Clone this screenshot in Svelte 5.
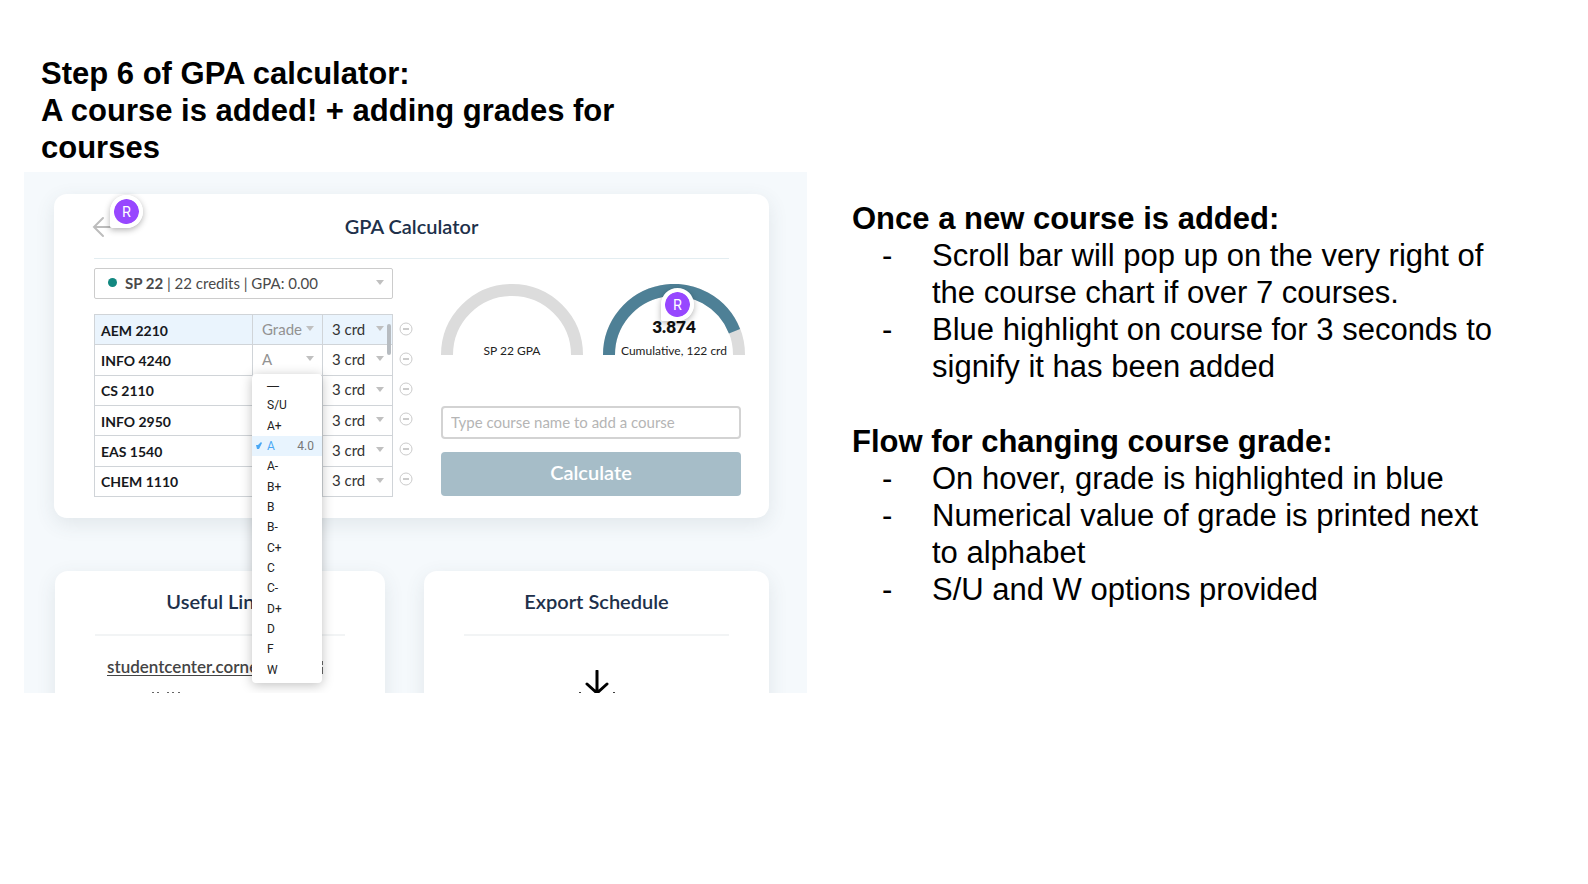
<script>
  const courses = [
    { name: 'AEM 2210', grade: 'Grade', fresh: true },
    { name: 'INFO 4240', grade: 'A' },
    { name: 'CS 2110', grade: '' },
    { name: 'INFO 2950', grade: '' },
    { name: 'EAS 1540', grade: '' },
    { name: 'CHEM 1110', grade: '' }
  ];
  const grades = ['—', 'S/U', 'A+', 'A', 'A-', 'B+', 'B', 'B-', 'C+', 'C', 'C-', 'D+', 'D', 'F', 'W'];
  const notes = [
    {
      title: 'Once a new course is added:',
      items: [
        'Scroll bar will pop up on the very right of the course chart if over 7 courses.',
        'Blue highlight on course for 3 seconds to signify it has been added'
      ]
    },
    {
      title: 'Flow for changing course grade:',
      items: [
        'On hover, grade is highlighted in blue',
        'Numerical value of grade is printed next to alphabet',
        'S/U and W options provided'
      ]
    }
  ];
</script>

{#snippet caret()}
  <svg class="caret" viewBox="0 0 8 5" aria-hidden="true"><path d="M0 0h8L4 5z" /></svg>
{/snippet}

<main class="slide">
  <section class="left">
    <h1>Step 6 of GPA calculator:<br />A course is added! + adding grades for courses</h1>

    <div class="mock">
      <article class="card calc">
        <header>
          <button class="back" aria-label="Back">
            <svg viewBox="0 0 30 20" width="30" height="20"><path d="M9 2L0 11l9 9M0 11h28" /></svg>
          </button>
          <h2>GPA Calculator</h2>
          <span class="pin pin-back">R</span>
        </header>

        <div class="body">
          <div class="courses">
            <button class="term">
              <i class="dot"></i>
              <span><b>SP 22</b> | 22 credits | GPA: 0.00</span>
              {@render caret()}
            </button>

            <div class="tablewrap">
              <table>
                <tbody>
                  {#each courses as c}
                    <tr class:fresh={c.fresh}>
                      <th scope="row">{c.name}</th>
                      <td class="grade">
                        {#if c.grade}
                          <button class="pick" aria-label="Grade for {c.name}">{c.grade}{@render caret()}</button>
                        {/if}
                      </td>
                      <td class="credit">
                        <button class="pick" aria-label="Credits for {c.name}">3 crd{@render caret()}</button>
                      </td>
                    </tr>
                  {/each}
                </tbody>
              </table>
              <span class="thumb"></span>
              <ul class="menu" role="listbox" aria-label="Grade">
                {#each grades as g}
                  <li role="option" aria-selected={g === 'A'} class:on={g === 'A'}>
                    <span class="tick">
                      {#if g === 'A'}
                        <svg viewBox="0 0 6 7" width="6" height="7"><path d="M0 3l2 0L5 0L6 1L3 7L1 7z" /></svg>
                      {/if}
                    </span>
                    {g}
                    {#if g === 'A'}<span class="value">4.0</span>{/if}
                  </li>
                {/each}
              </ul>
              <div class="removes">
                {#each courses as c}
                  <button aria-label="Remove {c.name}">
                    <svg viewBox="0 0 14 14" width="14" height="14"><circle cx="7" cy="7" r="6" /><path d="M4 7h6" /></svg>
                  </button>
                {/each}
              </div>
            </div>
          </div>

          <div class="side">
            <div class="gauges">
              <figure>
                <svg viewBox="0 0 142 71"><path class="track" d="M6 71a65 65 0 0 1 130 0" /></svg>
                <figcaption>SP 22 GPA</figcaption>
              </figure>
              <figure>
                <svg viewBox="0 0 142 71">
                  <path class="track" d="M6 71a65 65 0 0 1 130 0" />
                  <path class="fill" d="M6 71A65 65 0 0 1 131.5 47.2" />
                </svg>
                <strong>3.874</strong>
                <figcaption>Cumulative, 122 crd</figcaption>
                <span class="pin pin-gauge">R</span>
              </figure>
            </div>
            <input type="text" aria-label="Course name" placeholder="Type course name to add a course" />
            <button class="calculate">Calculate</button>
          </div>
        </div>
      </article>

      <div class="lower">
        <article class="card small">
          <h2>Useful Links</h2>
          <div class="links">
            <a href="#studentcenter">studentcenter.cornell.edu</a>
            <svg viewBox="0 0 12 13" width="12" height="13" aria-hidden="true"><path d="M5 1H1v11h10V6M7 1h4v3M11 1L5 7" /></svg>
          </div>
          <svg class="marks" viewBox="0 0 30 10" width="30" height="10" aria-hidden="true"><path d="M1 0v10M6 0v10M16 0v10M21 0v10M27 0v10" /></svg>
        </article>
        <article class="card small">
          <h2>Export Schedule</h2>
          <svg class="export" viewBox="0 0 40 40" width="40" height="40"><path d="M20 1v22M10 14l10 9 10-9" /><path class="tray" d="M3 23v14h34V23" /></svg>
        </article>
      </div>
    </div>
  </section>

  <section class="notes">
    {#each notes as n}
      <h3>{n.title}</h3>
      <ul>
        {#each n.items as item}<li>{item}</li>{/each}
      </ul>
    {/each}
  </section>
</main>

<style>
  :global(body) { margin: 0; background: #fff; }
  * { box-sizing: border-box; }
  h1, h2, h3, ul, figure { margin: 0; padding: 0; }
  button { font: inherit; color: inherit; background: none; border: 0; padding: 0; }
  ul { list-style: none; }
  svg { display: block; }

  .slide {
    display: grid;
    grid-template-columns: 783fr 700fr;
    gap: 45px;
    padding: 55px 36px 55px 24px;
    font-family: "Liberation Sans", Arial, sans-serif;
    color: #000;
  }
  h1, h3 { font-size: 31px; line-height: 37px; font-weight: 700; }
  h1 { padding: 0 150px 6px 17px; }

  .notes { padding-top: 145px; font-size: 31px; line-height: 37px; }
  .notes ul { padding-right: 56px; margin-bottom: 38px; }
  .notes li { position: relative; padding-left: 80px; }
  .notes li::before { content: "-"; position: absolute; left: 30px; }

  .mock {
    background: #f5f9fc;
    height: 521px;
    overflow: hidden;
    padding: 22px 38px 0 30px;
    font-family: Lato, sans-serif;
  }
  .card { background: #fff; border-radius: 13px; box-shadow: 0 6px 20px rgba(60, 80, 95, 0.11); }
  h2 { font-size: 20px; line-height: 24px; font-weight: 600; color: #20304a; text-align: center; }

  .calc { padding: 0 28px 21px 40px; }
  .calc header {
    position: relative;
    display: flex;
    align-items: center;
    height: 65px;
    margin-right: 12px;
    padding-bottom: 1px;
    border-bottom: 1px solid #e3edf1;
  }
  .calc h2 { flex: 1; margin-right: 30px; }
  .back svg { overflow: visible; }
  .back path { fill: none; stroke: #bdbdbd; stroke-width: 2; stroke-linecap: round; }

  .pin {
    position: absolute;
    width: 33px;
    height: 33px;
    border: 4px solid #fff;
    border-radius: 50% 50% 50% 2px;
    box-shadow: 0 2px 6px rgba(0, 0, 0, 0.3);
    color: #fff;
    font: 14px/25px Inter, sans-serif;
    text-align: center;
    background: radial-gradient(circle, #9747ff 12px, #fff 13px);
  }
  .pin-back { left: 16px; top: 1px; }
  .pin-gauge { left: 58px; top: 4px; }

  .body { display: grid; grid-template-columns: 299fr 300fr; gap: 48px; padding-top: 9px; }
  .term {
    display: flex;
    align-items: center;
    width: 100%;
    height: 31px;
    padding: 0 8px 2px 13px;
    border: 1px solid #ccc;
    border-radius: 2px;
    font-size: 15px;
    color: #4a4a4a;
  }
  .term span { flex: 1; text-align: left; }
  .dot { width: 9px; height: 9px; border-radius: 50%; background: #128880; margin-right: 8px; }
  .caret { width: 8px; height: 5px; fill: #c0c0c0; }

  .tablewrap { position: relative; margin-top: 15px; }
  table { width: 100%; height: 183px; border-collapse: collapse; table-layout: fixed; }
  th, td { border: 1px solid #d0d4d8; padding: 0; font-size: 15px; line-height: 18px; }
  th { text-align: left; padding: 2px 0 0 6px; font-size: 14px; font-weight: 700; color: #16181c; width: 158px; }
  td { padding-bottom: 2px; }
  .grade { width: 70px; color: #929292; }
  .credit { color: #333; }
  .pick { display: flex; align-items: center; justify-content: space-between; width: 100%; padding: 0 8px 0 9px; }
  .fresh { background: #eaf4fd; }
  .thumb {
    position: absolute;
    right: 2px;
    top: 10px;
    width: 4px;
    height: 31px;
    border-radius: 2px;
    background: #b7bcc1;
  }
  .removes {
    position: absolute;
    left: calc(100% + 6px);
    top: 0;
    height: 180px;
    display: grid;
    align-items: center;
  }
  .removes svg { fill: none; stroke: #ccc; }
  .removes path { stroke: #999; }

  .menu {
    position: absolute;
    z-index: 2;
    left: 158px;
    top: 60px;
    width: 70px;
    height: 309px;
    padding: 2px 0 3px;
    display: grid;
    grid-template-rows: 19px;
    grid-auto-rows: 1fr;
    background: #fff;
    border-radius: 4px;
    box-shadow: 0 2px 12px rgba(0, 0, 0, 0.25);
    font: 12px Roboto, sans-serif;
    color: #222;
  }
  .menu li { display: flex; align-items: center; padding-right: 8px; }
  .menu li:first-child { font-family: "Liberation Sans", sans-serif; }
  .menu .on { background: #e8f4fe; color: #4aa8f5; }
  .tick { width: 15px; padding-left: 4px; flex: none; }
  .tick path { fill: #4aa8f5; }
  .value { margin-left: auto; color: #777; }

  .side { display: flex; flex-direction: column; }
  .gauges { display: flex; justify-content: space-between; margin-right: -4px; padding-top: 16px; }
  figure { position: relative; width: 142px; text-align: center; color: #222; }
  figure path { fill: none; stroke-width: 12; }
  .track { stroke: #dcdcdc; }
  .fill { stroke: #4e8096; }
  figcaption { position: absolute; left: 0; right: 0; bottom: -4px; font-size: 12px; line-height: 16px; }
  strong { position: absolute; left: 0; right: 0; bottom: 18px; font-size: 17px; line-height: 20px; font-weight: 800; color: #111; }
  input {
    height: 33px;
    margin-top: 51px;
    padding: 0 8px 2px;
    border: 2px solid #d3d3d3;
    border-radius: 4px;
    font: 15px Lato, sans-serif;
  }
  input::placeholder { color: #b5b5b5; }
  .calculate {
    height: 44px;
    margin-top: 13px;
    padding-bottom: 4px;
    border-radius: 4px;
    background: #a6bdc8;
    color: #fff;
    font-size: 20px;
    font-weight: 600;
  }

  .lower { display: grid; grid-template-columns: 330fr 345fr; gap: 39px; margin: 53px 0 0 1px; }
  .small { height: 200px; padding: 18px 40px; }
  .small h2 { padding-bottom: 21px; border-bottom: 2px solid #f2f4f5; }
  .links { display: flex; justify-content: space-between; align-items: center; padding: 21px 22px 15px 12px; }
  .links a { font-size: 17px; line-height: 20px; font-weight: 600; color: #444; text-underline-offset: 2px; }
  .links svg { fill: none; stroke: #666; stroke-width: 2; }
  .marks { margin-left: 57px; stroke: #666; stroke-width: 2; }
  .export { margin: 34px auto 0; fill: none; stroke: #000; stroke-width: 3; stroke-linecap: round; }
  .tray { stroke-width: 2; }
</style>
